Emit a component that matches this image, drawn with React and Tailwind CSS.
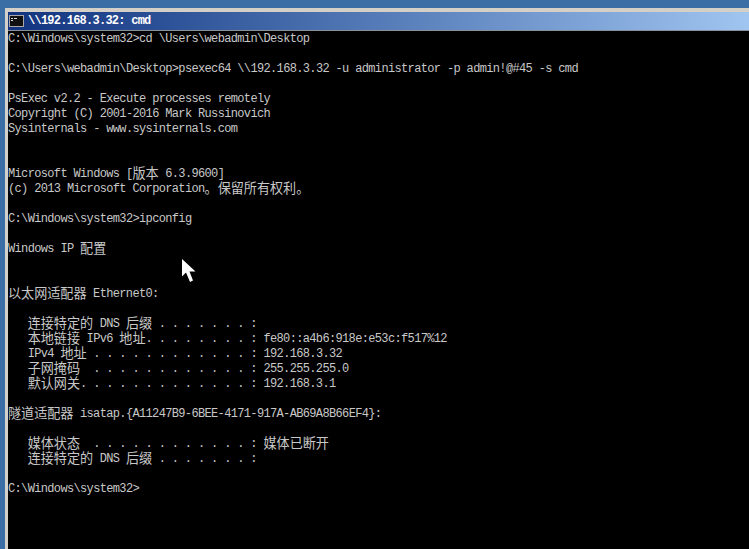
const mono = '"Liberation Mono", "Noto Sans CJK SC", monospace';

// CJK glyphs sit in double-width cells, twice the latin cell of 6.55px
const Zh = ({ children }) => (
  <span className="inline-block h-[11px] align-top text-[13.1px] leading-[11px] tracking-[0px]" style={{ fontFamily: '"Noto Sans CJK SC", sans-serif' }}>
    {children}
  </span>
);

const lines = [
  "C:\\Windows\\system32>cd \\Users\\webadmin\\Desktop",
  "",
  "C:\\Users\\webadmin\\Desktop>psexec64 \\\\192.168.3.32 -u administrator -p admin!@#45 -s cmd",
  "",
  "PsExec v2.2 - Execute processes remotely",
  "Copyright (C) 2001-2016 Mark Russinovich",
  "Sysinternals - www.sysinternals.com",
  "",
  "",
  <>Microsoft Windows [<Zh>版本</Zh> 6.3.9600]</>,
  <>(c) 2013 Microsoft Corporation<Zh>。保留所有权利。</Zh></>,
  "",
  "C:\\Windows\\system32>ipconfig",
  "",
  <>Windows IP <Zh>配置</Zh></>,
  "",
  "",
  <><Zh>以太网适配器</Zh> Ethernet0:</>,
  "",
  <>   <Zh>连接特定的</Zh> DNS <Zh>后缀</Zh> . . . . . . . :</>,
  <>   <Zh>本地链接</Zh> IPv6 <Zh>地址</Zh>. . . . . . . . : fe80::a4b6:918e:e53c:f517%12</>,
  <>   IPv4 <Zh>地址</Zh> . . . . . . . . . . . . : 192.168.3.32</>,
  <>   <Zh>子网掩码</Zh>  . . . . . . . . . . . . : 255.255.255.0</>,
  <>   <Zh>默认网关</Zh>. . . . . . . . . . . . . : 192.168.3.1</>,
  "",
  <><Zh>隧道适配器</Zh> isatap.{"{A11247B9-6BEE-4171-917A-AB69A8B66EF4}"}:</>,
  "",
  <>   <Zh>媒体状态</Zh>  . . . . . . . . . . . . : <Zh>媒体已断开</Zh></>,
  <>   <Zh>连接特定的</Zh> DNS <Zh>后缀</Zh> . . . . . . . :</>,
  "",
  "C:\\Windows\\system32>",
];

const App = () => (
  <div className="h-[549px] w-[749px] overflow-hidden bg-[#3a6ea5] pt-[8px] pl-[5px]">
    <div className="relative flex h-full flex-col border-l-[3px] border-t-[4px] border-l-[#d4d0c8] border-t-[#d4d0c8]">
      <div className="flex h-[19px] shrink-0 items-center gap-[4px] border-b border-b-[#8a8f98] bg-gradient-to-r from-[#12337f] to-[#a0c5f0] pl-[1px]">
        <svg width="15" height="12" viewBox="0 0 15 12" className="shrink-0">
          <rect width="15" height="12" fill="#a8a8a8" />
          <rect x="1" y="1" width="13" height="10" fill="#111" />
          <path d="M2 3h2v1H2zM5 3h3v1H5zM2 5h2v1H2z" fill="#ddd" />
        </svg>
        <span className="whitespace-pre text-[12px] font-bold tracking-[-0.75px] text-white" style={{ fontFamily: mono }}>
          {"\\\\192.168.3.32: cmd"}
        </span>
      </div>
      <div className="flex-1 bg-black pt-[1px]">
        {lines.map((line, i) => (
          <div key={i} className="h-[15px] whitespace-pre text-[12px] leading-[15px] tracking-[-0.65px] text-[#c8c8c8]" style={{ fontFamily: mono }}>
            {line}
          </div>
        ))}
      </div>
      <svg width="14" height="24" viewBox="0 0 14 24" className="absolute left-[174px] top-[247px]">
        <path d="M0 0V17.5L4 13.5 8 23 11 21.5 7.5 12.5H13.5z" fill="#fff" />
      </svg>
    </div>
  </div>
);

export default App;
